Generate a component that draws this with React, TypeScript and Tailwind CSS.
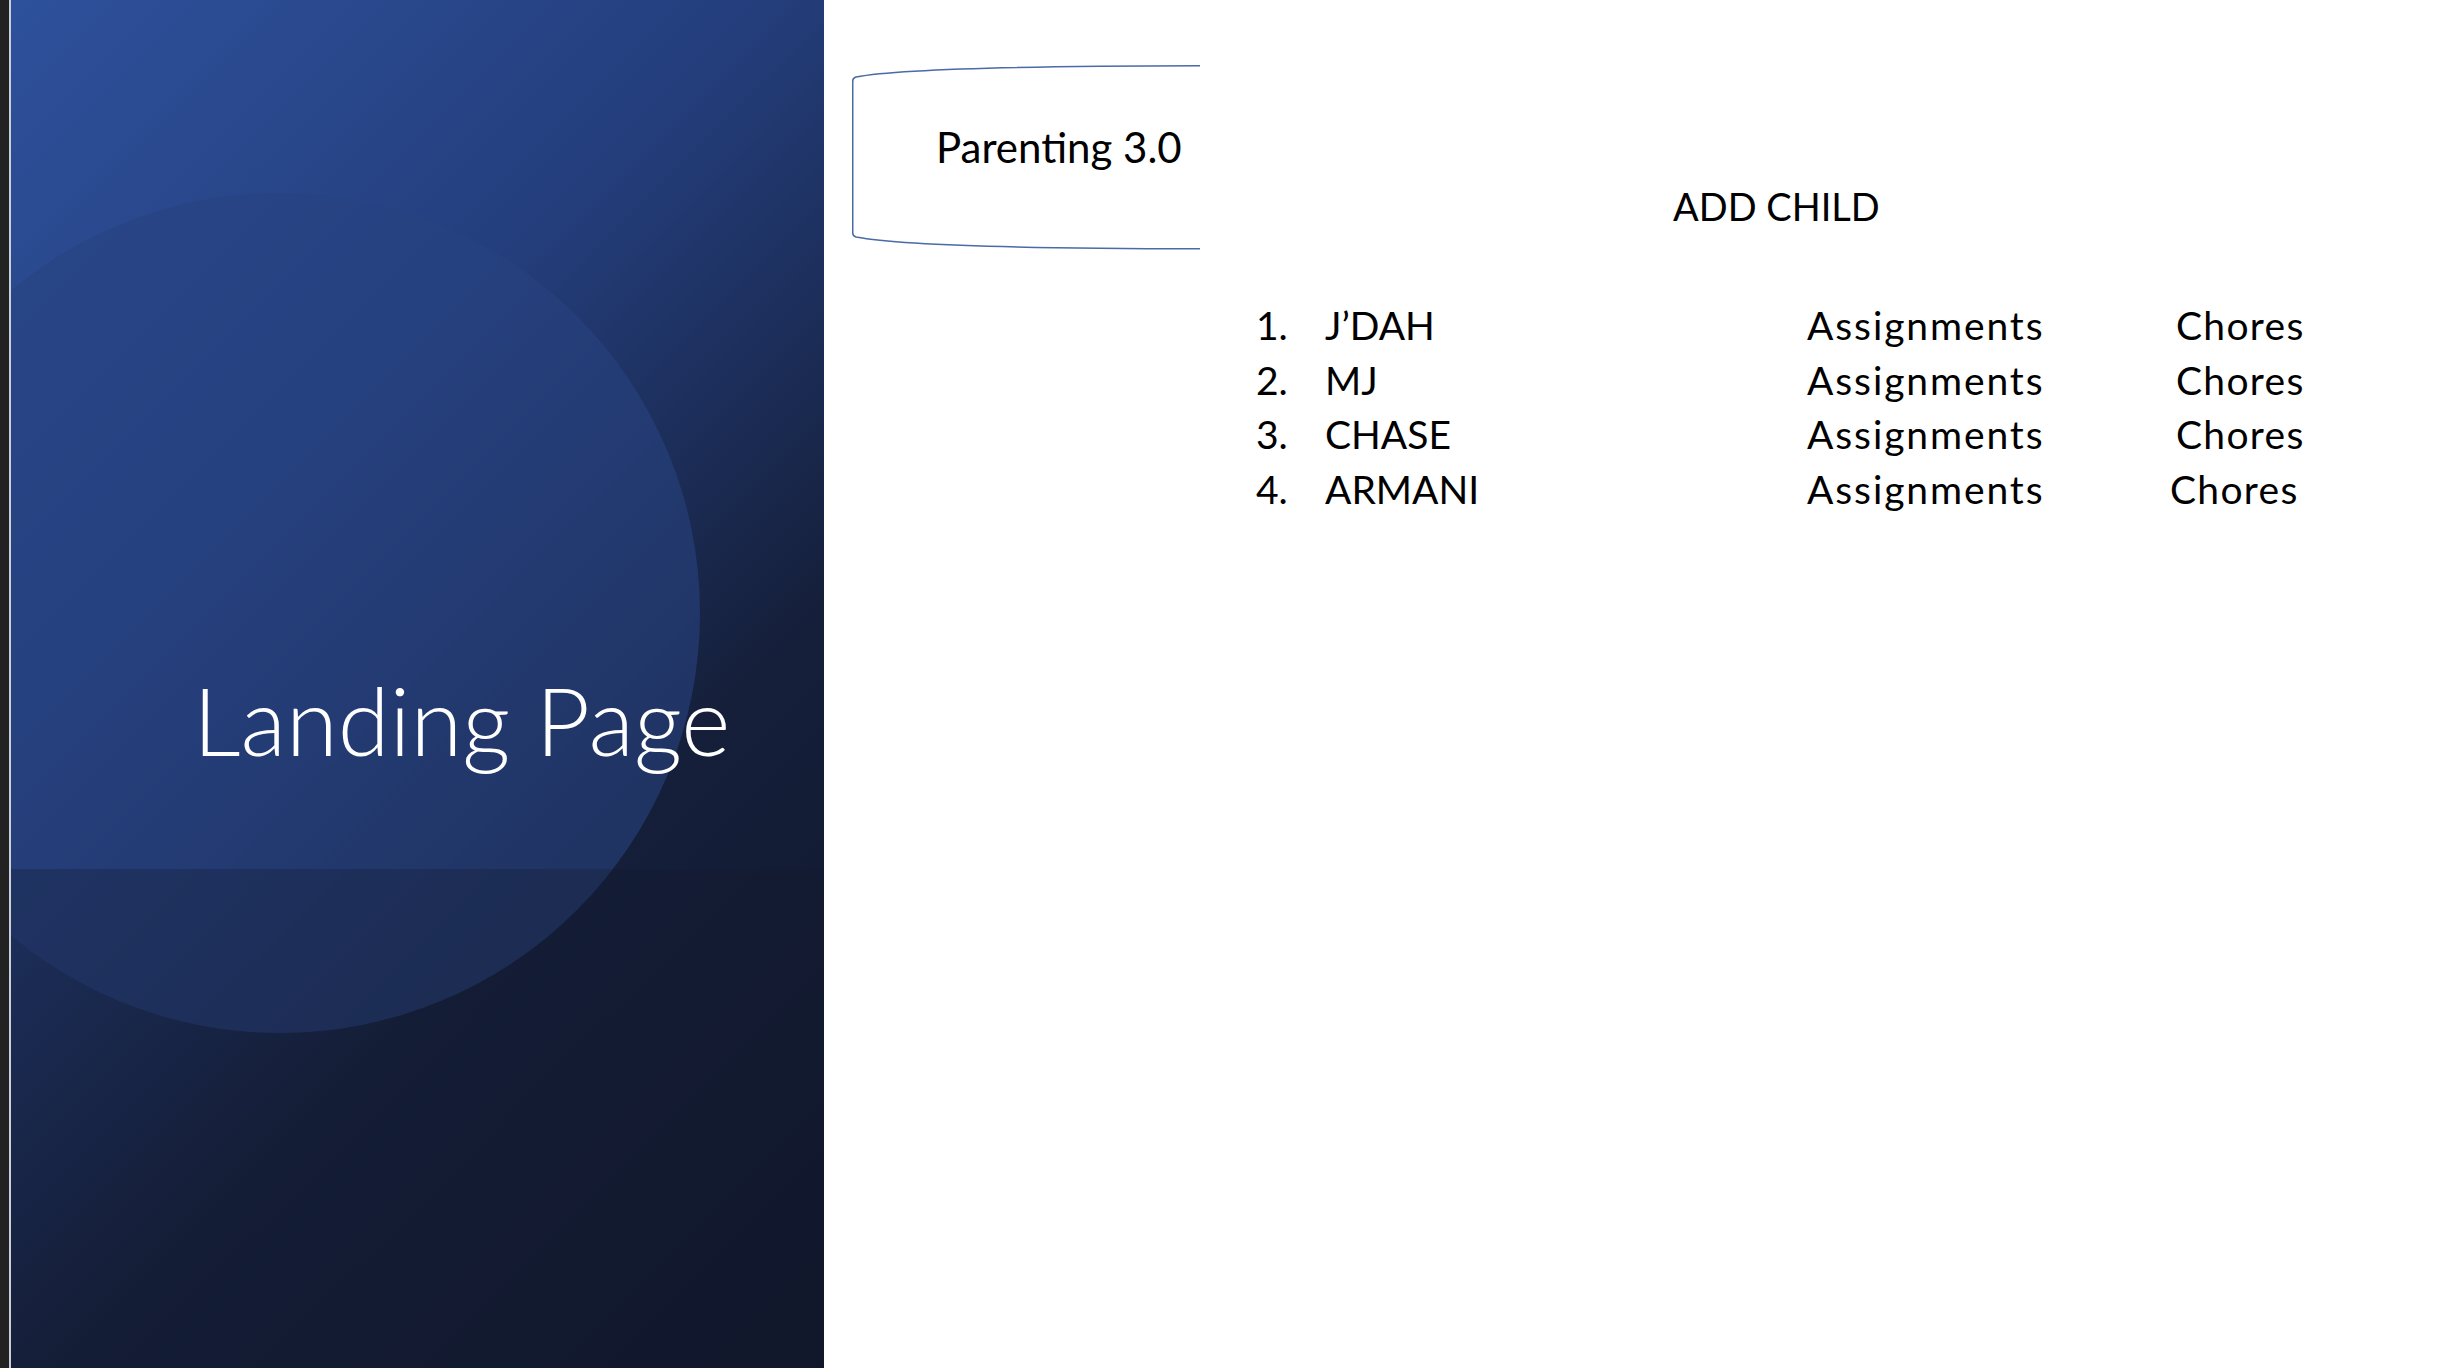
const kids = [
  { n: '1.', name: 'J’DAH', shift: false },
  { n: '2.', name: 'MJ', shift: false },
  { n: '3.', name: 'CHASE', shift: false },
  { n: '4.', name: 'ARMANI', shift: true },
];

function Banner() {
  return (
    <div className="relative ml-[28px] mt-[65px] h-[185px] w-[348px] shrink-0">
      <svg className="absolute inset-0" width="348" height="185" viewBox="0 0 348 185" fill="none">
        <path
          d="M348 0.75 C150 1, 40 5, 4 12 Q0.75 13 0.75 16 L0.75 168 Q0.75 171 4 172 C40 179, 150 183.5, 348 183.75"
          stroke="#4a6aa8"
          strokeWidth="1.5"
        />
      </svg>
      <p className="relative pl-[84px] pt-[61px] text-[42px] leading-none text-black whitespace-nowrap">Parenting 3.0</p>
    </div>
  );
}

export default function App() {
  return (
    <div className="flex h-[1368px] w-[2464px] overflow-hidden bg-white font-['Lato','Noto_Sans',sans-serif]">
      <div className="w-[9px] shrink-0 bg-[#222222]" />
      <div className="w-[2px] shrink-0 bg-[#c9ced8]" />

      {/* title slide panel */}
      <div className="relative w-[813px] shrink-0 overflow-hidden bg-[linear-gradient(135deg,#2e519c_0%,#243e7c_35%,#151f3a_65%,#10162a_100%)]">
        <div className="absolute left-[-151px] top-[193px] h-[840px] w-[840px] rounded-full bg-[#284380]/60" />
        <div className="absolute inset-x-0 bottom-0 top-[869px] bg-[#141c30]/30" />
        <h1 className="relative pl-[182px] pt-[673px] text-[94px] font-light leading-none text-white whitespace-nowrap">
          Landing Page
        </h1>
      </div>

      <div className="flex flex-1 flex-col text-black">
        <div className="flex items-start">
          <Banner />
          <p className="ml-[473px] mt-[187px] text-[38px] leading-none whitespace-nowrap">ADD CHILD</p>
        </div>

        <ol className="ml-[432px] mt-[48px] text-[39px] leading-[54.7px]">
          {kids.map((k) => (
            <li key={k.n} className="grid grid-cols-[69px_482px_369px_auto] whitespace-nowrap">
              <span>{k.n}</span>
              <span>{k.name}</span>
              <span className="tracking-[1.9px]">Assignments</span>
              <span className={k.shift ? '-ml-[6px] tracking-[1.3px]' : 'tracking-[1.3px]'}>Chores</span>
            </li>
          ))}
        </ol>
      </div>
    </div>
  );
}
